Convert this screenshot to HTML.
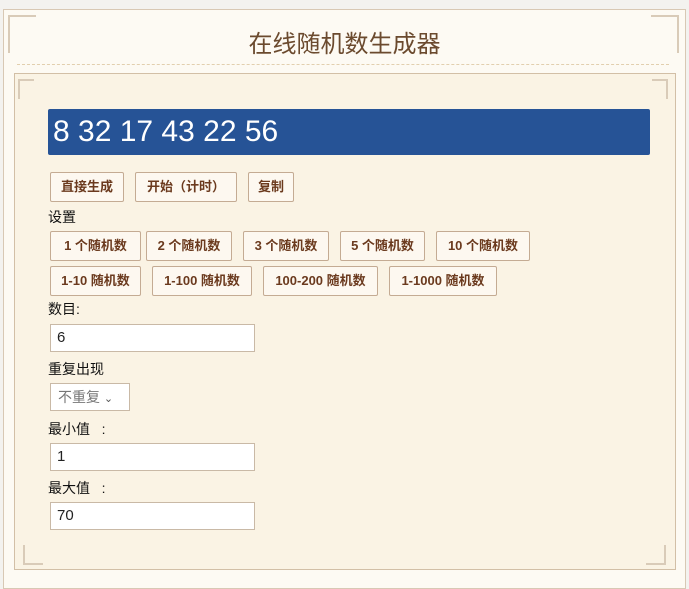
<!DOCTYPE html>
<html><head><meta charset="utf-8"><style>
*{box-sizing:border-box;margin:0;padding:0}
body{width:689px;height:575px;background:#f3f2ef;font-family:"Liberation Sans","Noto Sans CJK SC",sans-serif;position:relative;overflow:hidden;font-size:14px;color:#222}
.outer{position:absolute;left:3px;top:9px;width:683px;height:580px;background:#fdfaf3;border:1px solid #d8c8b4}
.title{position:absolute;left:0;top:24px;width:689px;text-align:center;font-size:24px;color:#6b4a2e}
.dash{position:absolute;left:17px;top:64px;width:652px;border-top:1px dashed #e2cfae}
.inner{position:absolute;left:14px;top:73px;width:662px;height:497px;background:#faf3e4;border:1px solid #d2bfa6}
.bar{position:absolute;left:48px;top:109px;width:602px;height:46px;background:#265396;border-radius:2px;color:#fff;font-size:30px;padding:5px 0 0 5px;line-height:36px}
.b{position:absolute;height:30px;border:1px solid #c4ab93;background:#fdf8f0;border-radius:2px;font-size:13px;font-weight:bold;color:#6b3a1e;text-align:center;line-height:28px}
.l{position:absolute;left:48px;font-size:14px;color:#111}
.in{position:absolute;left:50px;width:205px;height:28px;background:#fff;border:1px solid #c9b9a6;padding-left:6px;line-height:26px;font-size:15px}
.corner{position:absolute;width:22px;height:22px;border-color:#d9cbb8;border-style:solid}
</style></head><body>
<div class="outer"></div>
<div class="corner" style="left:8px;top:15px;border-width:2px 0 0 2px;width:28px;height:38px"></div>
<div class="corner" style="left:651px;top:15px;border-width:2px 2px 0 0;width:28px;height:38px"></div>
<div class="title">在线随机数生成器</div>
<div class="dash"></div>
<div class="inner"></div>
<div class="corner" style="left:18px;top:79px;border-width:2px 0 0 2px;width:16px;height:20px"></div>
<div class="corner" style="left:652px;top:79px;border-width:2px 2px 0 0;width:16px;height:20px"></div>
<div class="corner" style="left:23px;top:545px;border-width:0 0 2px 2px;width:20px;height:20px"></div>
<div class="corner" style="left:646px;top:545px;border-width:0 2px 2px 0;width:20px;height:20px"></div>
<div class="bar">8 32 17 43 22 56</div>
<div class="b" style="left:50px;top:172px;width:74px">直接生成</div>
<div class="b" style="left:135px;top:172px;width:102px">开始（计时）</div>
<div class="b" style="left:248px;top:172px;width:46px">复制</div>
<div class="l" style="top:207px">设置</div>
<div class="b" style="left:50px;top:231px;width:91px">1 个随机数</div>
<div class="b" style="left:146px;top:231px;width:86px">2 个随机数</div>
<div class="b" style="left:243px;top:231px;width:86px">3 个随机数</div>
<div class="b" style="left:340px;top:231px;width:85px">5 个随机数</div>
<div class="b" style="left:436px;top:231px;width:94px">10 个随机数</div>
<div class="b" style="left:50px;top:266px;width:91px">1-10 随机数</div>
<div class="b" style="left:152px;top:266px;width:100px">1-100 随机数</div>
<div class="b" style="left:263px;top:266px;width:115px">100-200 随机数</div>
<div class="b" style="left:389px;top:266px;width:108px">1-1000 随机数</div>
<div class="l" style="top:299px">数目:</div>
<div class="in" style="top:324px">6</div>
<div class="l" style="top:359px">重复出现</div>
<div class="in" style="top:383px;width:80px;color:#777;font-size:14px;padding-left:7px">不重复 <span style="font-size:11px;color:#555">&#8964;</span></div>
<div class="l" style="top:419px">最小值&nbsp;&nbsp;&nbsp;:</div>
<div class="in" style="top:443px">1</div>
<div class="l" style="top:478px">最大值&nbsp;&nbsp;&nbsp;:</div>
<div class="in" style="top:502px">70</div>
</body></html>
